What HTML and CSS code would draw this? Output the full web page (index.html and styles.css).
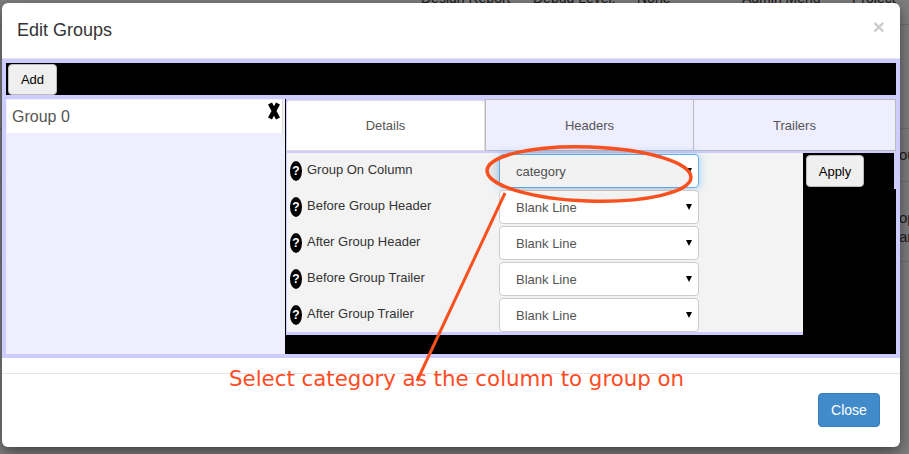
FILE: index.html
```html
<!DOCTYPE html>
<html lang="en">
<head>
<meta charset="utf-8">
<title>Edit Groups</title>
<link rel="stylesheet" href="styles.css">
</head>
<body>
<div class="backdrop">
  <div class="bg-top">
    <span class="c1">Design Report</span>
    <span class="c2">Debug Level:</span>
    <span class="c3">None</span>
    <span class="c4">Admin Menu</span>
    <span class="c5">Project</span>
  </div>
  <div class="bg-line l1"></div>
  <div class="bg-line l2"></div>
  <div class="bg-line l3"></div>
  <div class="bg-line l4"></div>
  <span class="frag f1">ou</span>
  <span class="frag f2">op</span>
  <span class="frag f3">ar</span>
</div>

<div class="modal">
  <header class="modal-header">
    <h4>Edit Groups</h4>
    <span class="close">×</span>
  </header>
  <div class="modal-body">
    <div class="toolbar"><button class="btn add">Add</button></div>
    <div class="content">
      <aside class="groups">
        <div class="group-item">
          <span>Group 0</span>
          <svg class="del" viewBox="0 0 12 18" width="12" height="18"><path d="M2 1.5 L10 16.5 M10 1.5 L2 16.5" stroke="#000" stroke-width="4.5" fill="none"/></svg>
        </div>
      </aside>
      <section class="detail">
        <div class="tabs">
          <div class="tab active">Details</div>
          <div class="tab">Headers</div>
          <div class="tab">Trailers</div>
        </div>
        <div class="pane">
          <form class="fields">
            <div class="row">
              <span class="help">?</span><label>Group On Column</label>
              <span class="sel"><select class="ctl focus"><option>category</option></select></span>
            </div>
            <div class="row">
              <span class="help">?</span><label>Before Group Header</label>
              <span class="sel"><select class="ctl"><option>Blank Line</option></select></span>
            </div>
            <div class="row">
              <span class="help">?</span><label>After Group Header</label>
              <span class="sel"><select class="ctl"><option>Blank Line</option></select></span>
            </div>
            <div class="row">
              <span class="help">?</span><label>Before Group Trailer</label>
              <span class="sel"><select class="ctl"><option>Blank Line</option></select></span>
            </div>
            <div class="row">
              <span class="help">?</span><label>After Group Trailer</label>
              <span class="sel"><select class="ctl"><option>Blank Line</option></select></span>
            </div>
          </form>
          <div class="apply-box"><button class="btn apply">Apply</button></div>
        </div>
      </section>
    </div>
  </div>
  <footer class="modal-footer"><button class="close-btn">Close</button></footer>
</div>

<svg class="markup" width="909" height="454" viewBox="0 0 909 454">
  <ellipse cx="589" cy="174" rx="102" ry="27" transform="rotate(2 589 174)" fill="rgba(0,0,0,0.05)" stroke="#f8501e" stroke-width="3.5"/>
  <path d="M505 193 L417 381" stroke="#f8501e" stroke-width="3" fill="none"/>
</svg>
<div class="caption">Select category as the column to group on</div>
</body>
</html>
```
FILE: styles.css
```css
* { box-sizing: border-box; }
html, body { margin: 0; height: 100%; }
body {
  position: relative;
  width: 909px;
  height: 454px;
  overflow: hidden;
  background: #7f7f7f;
  font-family: "Liberation Sans", Arial, sans-serif;
  font-size: 14px;
  color: #333;
}

/* dimmed page behind the dialog */
.backdrop { position: absolute; inset: 0; color: #1a1a1a; }
.bg-top { position: absolute; left: 0; right: 0; top: -10px; height: 16px; font-size: 14px; line-height: 16px; }
.bg-top span { position: absolute; top: 0; white-space: nowrap; }
.c1 { left: 421px; } .c2 { left: 533px; } .c3 { left: 637px; } .c4 { left: 742px; } .c5 { left: 852px; }
.bg-line { position: absolute; left: 0; right: 0; height: 1px; background: #707070; }
.l1 { top: 24px; } .l2 { top: 128px; } .l3 { top: 181px; } .l4 { top: 261px; }
.frag { position: absolute; left: 899px; font-size: 15px; line-height: 17px; }
.f1 { top: 146px; } .f2 { top: 209px; } .f3 { top: 228px; }

/* dialog */
.modal {
  position: relative;
  width: 898px;
  height: 444px;
  margin: 3px 0 0 2px;
  background: #fff;
  border-radius: 6px;
  box-shadow: 0 5px 15px rgba(0, 0, 0, .5);
  display: flex;
  flex-direction: column;
}
.modal-header {
  height: 56px;
  padding: 0 15px;
  display: flex;
  align-items: center;
  justify-content: space-between;
  border-bottom: 1px solid #e5e5e5;
}
.modal-header h4 { margin: 0; font-size: 18px; font-weight: 400; line-height: 25px; color: #333; }
.close { font-size: 21px; font-weight: 700; line-height: 1; color: #000; opacity: .2; margin: -9px 0 0 0; }

.modal-body { height: 299px; background: #ccf; padding: 4px 4px; }
.toolbar { height: 32px; background: #000; padding: 1px 3px 0 2px; }
.btn {
  display: block;
  font: 13px "Liberation Sans", Arial, sans-serif;
  color: #000;
  background: #efefef;
  border: 1px solid #bbb;
  border-radius: 4px;
  padding: 0;
}
.add { width: 49px; height: 31px; }

.content { display: flex; height: 255px; margin-top: 4px; }
.groups { width: 279px; background: #eef; padding: 1px 2px 0 1px; }
.group-item {
  height: 33px;
  background: #fff;
  border-right: 1px solid #ddd;
  padding-left: 5px;
  display: flex;
  align-items: center;
  justify-content: space-between;
  font-size: 16px;
  color: #555;
}
.del { margin: -12px 2px 0 0; filter: blur(.4px); }

.detail { flex: 1; background: #000; padding-left: 1px; display: flex; flex-direction: column; }
.tabs { display: flex; height: 54px; background: #ccf; padding-bottom: 2px; }
.tab {
  background: #eef;
  border: 1px solid #bbb;
  color: #555;
  font-size: 13px;
  display: flex;
  align-items: center;
  justify-content: center;
}
.tab:nth-child(1) { width: 198px; margin-left: 1px; margin-top: 1px; background: #fff; border-color: #ddd; border-top-left-radius: 3px; border-top-right-radius: 3px; border-left: 0; }
.tab:nth-child(2) { width: 208px; border-right: 0; }
.tab:nth-child(3) { width: 203px; }

.pane { display: flex; align-items: flex-start; }
.fields {
  width: 517px;
  height: 182px;
  margin: 0;
  padding-top: 1px;
  background: #f3f3f3;
  border-left: 1px solid #ccf;
  border-bottom: 3px solid #ccf;
}
.row { height: 36px; display: flex; align-items: flex-start; }
.help {
  width: 12px;
  height: 20px;
  margin: 7px 5px 0 3px;
  border-radius: 50%;
  background: #000;
  color: #fff;
  font-size: 12px;
  font-weight: 700;
  line-height: 20px;
  text-align: center;
}
.row label { width: 192px; padding-top: 8px; font-size: 13px; line-height: 16px; color: #333; }
.sel { position: relative; display: block; width: 200px; height: 34px; }
.sel::after {
  content: "";
  position: absolute;
  right: 7px;
  top: 14px;
  border-style: solid;
  border-width: 6px 3.5px 0;
  border-color: #000 transparent transparent;
}
.ctl {
  display: block;
  width: 200px;
  height: 34px;
  padding: 6px 12px 6px 16px;
  font: 13px "Liberation Sans", Arial, sans-serif;
  color: #555;
  background: #fff;
  border: 1px solid #ccc;
  border-radius: 4px;
  appearance: none;
  -webkit-appearance: none;
}
.focus { border-color: #66afe9; box-shadow: 0 0 8px rgba(102, 175, 233, .6); outline: 0; }

.apply-box { flex: 1; height: 36px; border-right: 2px solid #ccf; padding: 2px 0 0 3px; }
.apply { width: 58px; height: 32px; }

.modal-footer { flex: 1; margin-top: 15px; border-top: 1px solid #e5e5e5; padding: 19px 20px 0 0; display: flex; justify-content: flex-end; align-items: flex-start; }
.close-btn {
  width: 62px;
  height: 34px;
  font: 14px "Liberation Sans", Arial, sans-serif;
  color: #fff;
  background: #428bca;
  border: 1px solid #357ebd;
  border-radius: 4px;
  padding: 0;
}

/* hand-drawn annotation on top of the screenshot */
.markup { position: absolute; left: 0; top: 0; pointer-events: none; }
.caption {
  position: absolute;
  left: 229px;
  top: 366px;
  font-family: "DejaVu Sans", sans-serif;
  font-size: 21.33px;
  line-height: 25px;
  color: #ff4b1f;
  white-space: nowrap;
}
```
